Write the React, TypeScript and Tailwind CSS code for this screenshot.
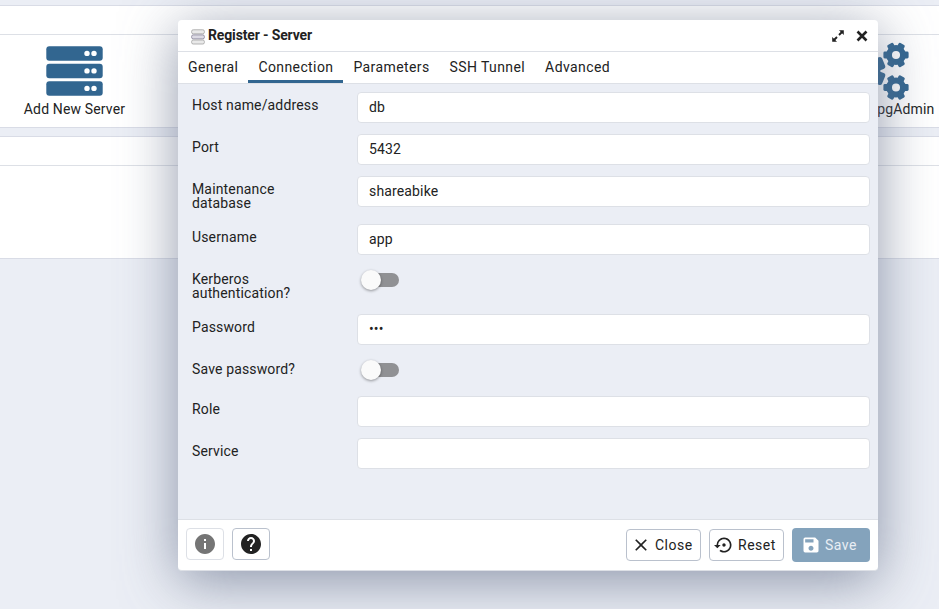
import React from "react";
import { MdClose, MdHelp, MdInfo, MdSave, MdSettingsBackupRestore } from "react-icons/md";

function ServerStack() {
  return (
    <svg className="h-[50px] w-[57px]" viewBox="0 0 57 50">
      {[0, 17.5, 35].map((y) => (
        <g key={y}>
          <rect x="0.3" y={y + 0.3} width="56.4" height="14.4" rx="3" fill="#326690" />
          <circle cx="41" cy={y + 7.4} r="2.7" fill="#fff" />
          <circle cx="48" cy={y + 7.4} r="2.7" fill="#fff" />
        </g>
      ))}
    </svg>
  );
}

function Gear({ cx, cy, r, teeth, turn }: { cx: number; cy: number; r: number; teeth: number; turn: number }) {
  return (
    <g transform={`translate(${cx} ${cy}) rotate(${turn}) scale(${r / 12.3})`}>
      <circle r="6.9" fill="none" stroke="#326690" strokeWidth="5.8" />
      {Array.from({ length: teeth }, (_, i) => (
        <rect key={i} x="7" y="-3.4" width="5.5" height="6.8" rx="1.4" fill="#326690" transform={`rotate(${(i * 360) / teeth})`} />
      ))}
    </g>
  );
}

function Cogs() {
  return (
    <svg className="-mt-[3px] h-14 w-[70px] overflow-visible" viewBox="0 0 70 56">
      <Gear cx={24} cy={28} r={23} teeth={8} turn={22.5} />
      <Gear cx={58} cy={12} r={12.4} teeth={6} turn={0} />
      <Gear cx={58} cy={44.5} r={12.4} teeth={6} turn={0} />
    </svg>
  );
}

function ServerSmall() {
  return (
    <svg className="mt-[2px] h-4 w-[14px]" viewBox="0 0 14 16" fill="#e9e9e9" stroke="#aaa" strokeWidth="0.9">
      <rect x="0.6" y="0.8" width="12.8" height="4" rx="1.6" />
      <rect x="0.6" y="5.9" width="12.8" height="4" rx="1.6" fill="#dcdae4" stroke="#8f8b9f" />
      <rect x="0.6" y="11" width="12.8" height="4" rx="1.6" />
    </svg>
  );
}

function Field({ label, value, height, toggle }: { label: string; value?: string; height: string; toggle?: boolean }) {
  return (
    <div className={`flex items-start ${height}`}>
      <div className="w-[165px] pr-8 pt-[6px] leading-[14px]">{label}</div>
      {toggle ? (
        <div className="flex h-7 items-center pl-1">
          <div className="flex h-[14px] w-[38px] items-center">
            <div className="z-10 h-5 w-5 shrink-0 rounded-full bg-[#fafafa] shadow-[0_1px_3px_rgba(0,0,0,0.4)]" />
            <div className="-ml-4 h-[14px] w-[34px] shrink-0 rounded-full bg-[#909194]" />
          </div>
        </div>
      ) : (
        <div className="flex h-[31px] flex-1 items-center rounded border border-[#dde0e6] bg-white px-[11px] pb-[2px]">{value}</div>
      )}
    </div>
  );
}

const tabs = ["General", "Connection", "Parameters", "SSH Tunnel", "Advanced"];

export default function App() {
  return (
    <div
      className="relative h-[609px] w-[939px] overflow-hidden bg-[#ebeef5] pt-[5px] text-sm text-[#222]"
      style={{ fontFamily: "Roboto, sans-serif" }}
    >
      <div className="h-[123px] border-y border-[#d9dce6] bg-white">
        <div className="h-[29px] border-b border-[#dde0e6]" />
        <div className="flex justify-between pt-[11px]">
          <div className="flex w-[149px] flex-col items-center">
            <ServerStack />
            <div className="mt-[3px] leading-5 tracking-[0.15px]">Add New Server</div>
          </div>
          <div className="mr-px flex w-[130px] flex-col items-center">
            <Cogs />
            <div className="leading-5 tracking-[0.15px] whitespace-nowrap">Configure pgAdmin</div>
          </div>
        </div>
      </div>
      <div className="mt-2 h-[123px] border-y border-[#d9dce6] bg-white">
        <div className="h-[29px] border-b border-[#dde0e6]" />
      </div>

      <div className="absolute left-[178px] top-5 flex h-[551px] w-[700px] flex-col overflow-hidden rounded border-b border-[#dde0e6] bg-white tracking-[0.15px] shadow-[0_10px_56px_0px_rgba(98,110,136,0.7)]">
        <div className="flex h-8 shrink-0 items-center border-b border-[#dde0e6] pl-[13px] pr-[9px]">
          <ServerSmall />
          <div className="-mt-[2px] ml-[3px] flex-1 font-bold tracking-[-0.15px]">Register - Server</div>
          <svg className="mr-[10px] h-[14px] w-[14px]" viewBox="0 0 14 14" fill="#222" stroke="#222">
            <path d="M8 1.2h4.8V6zM1.2 8v4.8H6z" stroke="none" />
            <path d="M11.5 2.5 8 6M2.5 11.5 6 8" strokeWidth="1.9" fill="none" />
          </svg>
          <svg className="h-[14px] w-[14px]" viewBox="0 0 14 14" stroke="#222" strokeWidth="2.6">
            <path d="m2.5 2.5 9 9m0-9-9 9" />
          </svg>
        </div>
        <div className="flex h-8 shrink-0 border-b border-[#dde0e6] tracking-[0.4px]">
          {tabs.map((tab) => (
            <div
              key={tab}
              className={`flex h-[31px] items-center border-b-[3px] px-[10px] pt-[2px] ${tab === "Connection" ? "border-[#326690]" : "border-transparent"}`}
            >
              {tab}
            </div>
          ))}
        </div>
        <div className="flex-1 bg-[#ebeef5] pl-[14px] pr-2 pt-2">
          <Field label="Host name/address" value="db" height="h-[42px]" />
          <Field label="Port" value="5432" height="h-[42px]" />
          <Field label="Maintenance database" value="shareabike" height="h-12" />
          <Field label="Username" value="app" height="h-[42px]" />
          <Field label="Kerberos authentication?" height="h-12" toggle />
          <Field label="Password" value="•••" height="h-[42px]" />
          <Field label="Save password?" height="h-10" toggle />
          <Field label="Role" height="h-[42px]" />
          <Field label="Service" height="h-[42px]" />
        </div>
        <div className="flex h-[51px] shrink-0 items-center border-t border-[#dde0e6] px-2 tracking-[0.5px]">
          <div className="mb-[2px] flex h-8 w-[38px] items-center justify-center rounded border border-[#dde0e6]">
            <MdInfo className="h-6 w-6 text-[#757575]" />
          </div>
          <div className="mb-[2px] ml-2 flex h-8 w-[38px] items-center justify-center rounded border border-[#bac1cd]">
            <MdHelp className="h-6 w-6" />
          </div>
          <div className="ml-auto flex h-8 w-[75px] items-center rounded border border-[#bac1cd] pl-1">
            <MdClose className="mr-1 h-5 w-5" />
            Close
          </div>
          <div className="ml-2 flex h-8 w-[75px] items-center rounded border border-[#bac1cd] pl-1">
            <MdSettingsBackupRestore className="mr-1 h-5 w-5" />
            Reset
          </div>
          <div className="ml-2 flex h-[34px] w-[78px] items-center rounded bg-[#84a3bc] pl-[9px] text-[#e8eef4]">
            <MdSave className="mr-1 h-5 w-5 text-white" />
            Save
          </div>
        </div>
      </div>
    </div>
  );
}
